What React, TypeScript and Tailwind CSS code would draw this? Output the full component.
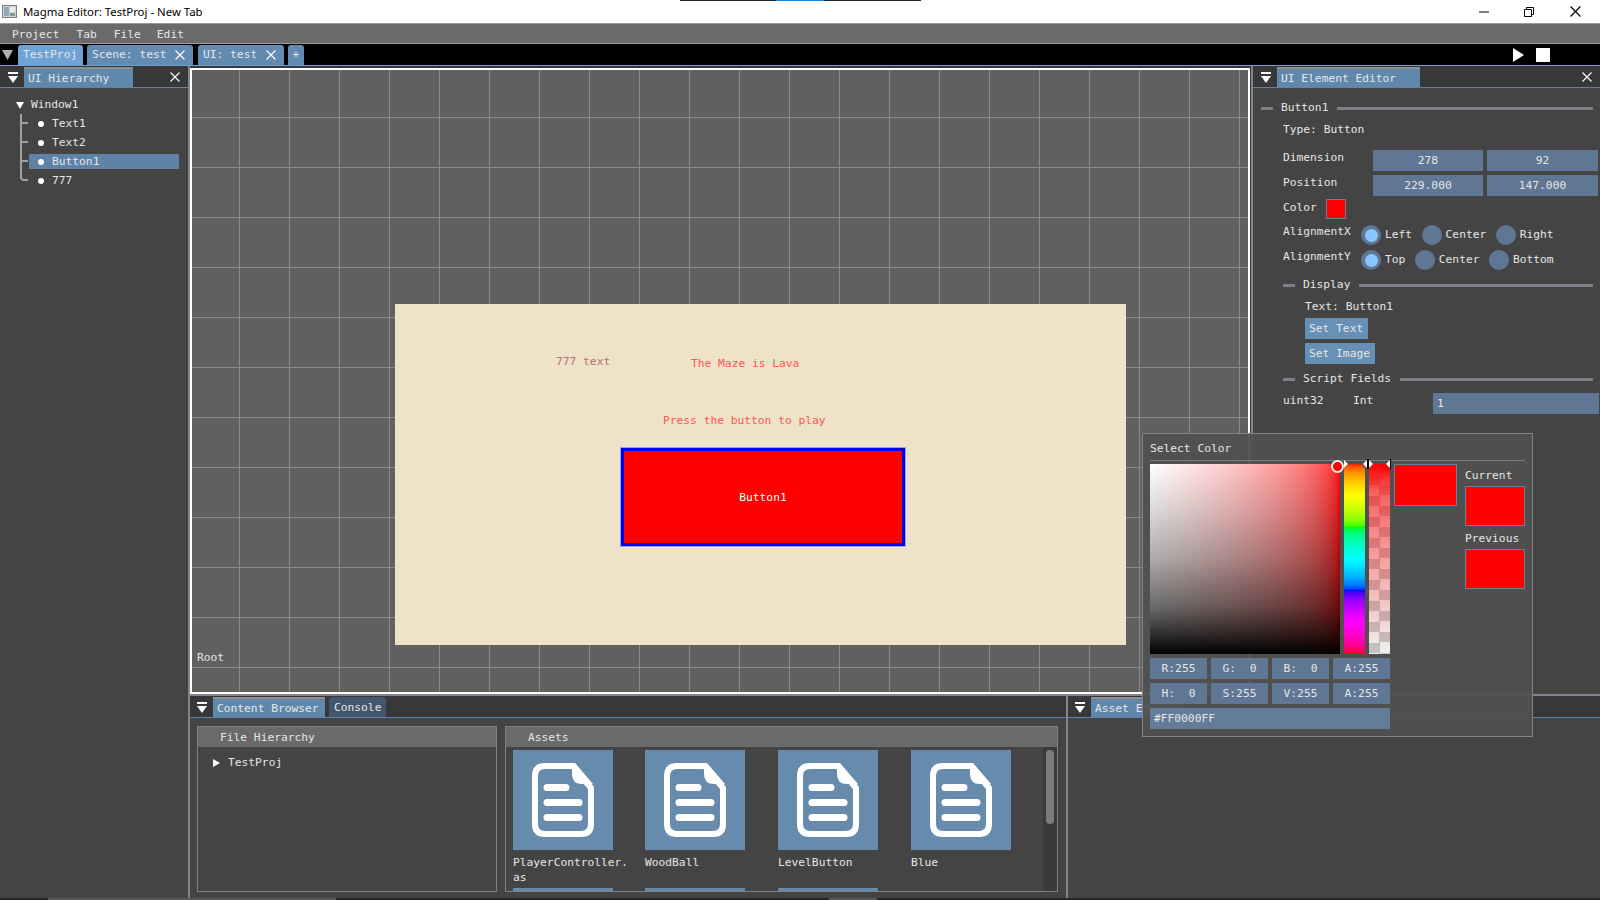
import React from "react";

const TEXT = "text-[#e6e6e6]";

function PanelIcon() {
  return (
    <svg width="10" height="12" viewBox="0 0 10 12" className="shrink-0">
      <rect x="0" y="0" width="10" height="2" fill="#fff" />
      <path d="M0 4 H10 L5 11 Z" fill="#fff" />
    </svg>
  );
}

function CloseX({ size = 10, color = "#fff" }: { size?: number; color?: string }) {
  return (
    <svg width={size} height={size} viewBox="0 0 10 10" className="shrink-0">
      <path d="M0.5 0.5 L9.5 9.5 M9.5 0.5 L0.5 9.5" stroke={color} strokeWidth="1.1" fill="none" />
    </svg>
  );
}

function TopTab({ label, active, width, close }: { label: string; active?: boolean; width: string; close?: boolean }) {
  return (
    <div
      className={`${width} h-[20px] flex items-center pl-[5px] pr-[5px] justify-between rounded-t-[3px] ${
        active ? "bg-[#6fa3d6]" : "bg-[#628bb2]"
      } ${TEXT}`}
    >
      <span>{label}</span>
      {close && (
        <span className="mr-[3px]">
          <CloseX />
        </span>
      )}
    </div>
  );
}

function HierarchyRow({ label, selected }: { label: string; selected?: boolean }) {
  return (
    <div className="h-[19px] flex items-center">
      <div className={`w-[150px] h-[15px] flex items-center pl-[9px] ${selected ? "bg-[#5f83a6]" : ""}`}>
        <span className="w-[6px] h-[6px] rounded-full bg-white mr-[8px]" />
        <span>{label}</span>
      </div>
    </div>
  );
}

function Section({ label, indent }: { label: string; indent: string }) {
  return (
    <div className={`h-[16px] flex items-center ${indent} pr-[7px]`}>
      <div className="w-[12px] h-[3px] bg-[#7e7e88]" />
      <span className="ml-[8px] mr-[9px]">{label}</span>
      <div className="flex-1 h-[3px] bg-[#7e7e88]" />
    </div>
  );
}

function NumBox({ value, width }: { value: string; width: string }) {
  return <div className={`${width} h-[21px] bg-[#5f7795] flex items-center justify-center`}>{value}</div>;
}

function Radio({ on }: { on?: boolean }) {
  return (
    <div className="w-[20px] h-[20px] rounded-full bg-[#5f7795] flex items-center justify-center shrink-0">
      {on && <div className="w-[13px] h-[13px] rounded-full bg-[#8ac6ff]" />}
    </div>
  );
}

function RadioRow({ label, options }: { label: string; options: string[] }) {
  return (
    <div className="h-[20px] flex items-center pl-[30px]">
      <span className="w-[78px] mb-[6px]">{label}</span>
      {options.map((o, i) => (
        <div key={o} className="flex items-center mr-[9.5px]">
          <Radio on={i === 0} />
          <span className="ml-[4px]">{o}</span>
        </div>
      ))}
    </div>
  );
}

function DocTile({ label, second }: { label?: string; second?: string }) {
  return (
    <div>
      <div className="w-[100px] h-[100px] bg-[#668bad]">
        <svg width="100" height="100" viewBox="0 0 100 100">
          <path
            d="M32 16 H60 L78 38 V74 Q78 84 68 84 H32 Q22 84 22 74 V26 Q22 16 32 16 Z"
            fill="none"
            stroke="#fff"
            strokeWidth="6"
            strokeLinejoin="round"
          />
          <path d="M59 14 V24 Q59 34 69 34 H80 L62 13 Z" fill="#fff" />
          <path d="M34 37.5 H53 M34 52.5 H66 M34 67.5 H66" stroke="#fff" strokeWidth="7" strokeLinecap="round" />
        </svg>
      </div>
      {label && (
        <div className="mt-[5px] leading-[15px] h-[33px]">
          <div>{label}</div>
          {second && <div>{second}</div>}
        </div>
      )}
    </div>
  );
}

function ColorBox({ value }: { value: string }) {
  return <div className="w-[57px] h-[21px] pt-px bg-[#5f7795] flex items-center justify-center whitespace-pre">{value}</div>;
}

function ColorPopup() {
  return (
    <div className={`absolute left-[1142px] top-[433px] w-[391px] h-[304px] border border-[#84848e] bg-[#505050]/95 ${TEXT}`}>
      <div className="h-[27px] mx-[7px] border-b border-[#7c7c7c] flex items-center pt-[4px]">Select Color</div>
      <div className="flex px-[7px] pt-[3px]">
        <div className="w-[240px] shrink-0">
          <div className="flex gap-[4px] relative">
            <div className="w-[190px] h-[190px] bg-[linear-gradient(to_bottom,#0000_0%,#00000026_25%,#00000054_50%,#00000094_75%,#000000d1_90%,#000_100%),linear-gradient(to_right_in_srgb-linear,#fff,#f00)]" />
            <div className="w-[21px] h-[190px] rounded-t-[6px] bg-[linear-gradient(to_bottom_in_srgb-linear,#f00,#ff0,#0f0,#0ff,#00f,#f0f,#f00)]" />
            <div className="w-[21px] h-[190px] rounded-t-[6px] bg-[linear-gradient(to_bottom,#f00,#ff000099_15%,#ff000066_40%,#ff000033_70%,#ff000000),repeating-conic-gradient(#c4c4c4_0_25%,#f0f0f0_0_50%)] bg-size-[100%_100%,21px_21px]" />
            <div className="absolute left-[181px] top-[-4px] w-[13px] h-[13px] rounded-full bg-[#f00] border-2 border-[#eee]" />
            <svg width="52" height="10" viewBox="0 0 52 10" className="absolute left-[194px] top-[-5px]">
              <path d="M0 1 L4 5 L0 9 Z" fill="#fff" />
              <path d="M23 1 L19 5 L23 9 Z" fill="#fff" />
              <rect x="23" y="0" width="2" height="10" fill="#000" />
              <path d="M25 1 L29 5 L25 9 Z" fill="#fff" />
              <path d="M46 1 L42 5 L46 9 Z" fill="#fff" />
              <rect x="46" y="0" width="1" height="10" fill="#000" />
            </svg>
          </div>
          <div className="flex gap-[4px] mt-[4px]">
            <ColorBox value="R:255" />
            <ColorBox value="G:  0" />
            <ColorBox value="B:  0" />
            <ColorBox value="A:255" />
          </div>
          <div className="flex gap-[4px] mt-[4px]">
            <ColorBox value="H:  0" />
            <ColorBox value="S:255" />
            <ColorBox value="V:255" />
            <ColorBox value="A:255" />
          </div>
          <div className="h-[21px] mt-[4px] pt-px bg-[#637c99] flex items-center pl-[4px]">#FF0000FF</div>
        </div>
        <div className="w-[63px] h-[42px] ml-[4px] bg-[#f00] border border-[#6a7ea0] shrink-0" />
        <div className="ml-[8px] w-[60px]">
          <div className="h-[22px] flex items-center pt-[2px]">Current</div>
          <div className="h-[40px] bg-[#f00] border border-[#6a7ea0]" />
          <div className="h-[23px] flex items-center pt-[2px]">Previous</div>
          <div className="h-[40px] bg-[#f00] border border-[#6a7ea0]" />
        </div>
      </div>
    </div>
  );
}

function UiHierarchy() {
  return (
    <div className="w-[188px] flex flex-col bg-[#444444] shrink-0">
      <div className="h-[22px] flex items-end bg-[#383838] border-b border-[#5f83a6] pl-[8px] pr-[8px]">
        <div className="h-[19px] flex items-center mr-[6px]">
          <PanelIcon />
        </div>
        <div className="w-[109px] h-[20px] bg-[#6088ad] border-t-2 border-[#8f8f8f] flex items-center pl-[4px] pt-px">UI Hierarchy</div>
        <div className="flex-1 h-[20px] flex items-center justify-end">
          <CloseX />
        </div>
      </div>
      <div className="pt-[8px] pl-[16px]">
        <div className="h-[18px] flex items-center">
          <svg width="8" height="7" viewBox="0 0 8 7">
            <path d="M0 0 H8 L4 7 Z" fill="#fff" />
          </svg>
          <span className="ml-[7px]">Window1</span>
        </div>
        <div className="flex">
          <svg width="13" height="71" viewBox="0 0 13 71" className="shrink-0">
            <path
              d="M5 0 V63 Q5 66 8 66 H12 M5 9 H12 M5 28 H12 M5 47 H12"
              stroke="#a0a0a0"
              strokeWidth="2"
              fill="none"
            />
          </svg>
          <div>
            <HierarchyRow label="Text1" />
            <HierarchyRow label="Text2" />
            <HierarchyRow label="Button1" selected />
            <HierarchyRow label="777" />
          </div>
        </div>
      </div>
    </div>
  );
}

function Viewport() {
  return (
    <div className="relative w-[1060px] h-[626px] mt-[2px] border-2 border-white bg-[#606060] bg-[linear-gradient(to_right,#8a8a8a_1px,transparent_1px),linear-gradient(to_bottom,#8a8a8a_1px,transparent_1px)] bg-size-[50px_50px] bg-position-[47px_47px] overflow-hidden">
      <div className="absolute left-[203px] top-[234px] w-[731px] h-[341px] bg-[#eee2c8]">
        <span className="absolute left-[161px] top-[52px] text-[#b87070]">777 text</span>
        <span className="absolute left-[296px] top-[54px] text-[#ff5555]">The Maze is Lava</span>
        <span className="absolute left-[268px] top-[111px] text-[#ff5555]">Press the button to play</span>
        <div className="absolute left-[226px] top-[144px] w-[284px] h-[98px] pt-[2px] bg-[#f00] border-[3px] border-[#0000f0] outline outline-1 outline-[#a0a0e0] flex items-center justify-center text-white">
          Button1
        </div>
      </div>
      <span className="absolute left-[5px] top-[582px]">Root</span>
    </div>
  );
}

function ElementEditor() {
  return (
    <div className="flex-1 flex flex-col bg-[#444444] min-w-0">
      <div className="h-[22px] flex items-end bg-[#383838] border-b border-[#5f83a6] pl-[8px] pr-[8px]">
        <div className="h-[19px] flex items-center mr-[6px]">
          <PanelIcon />
        </div>
        <div className="w-[143px] h-[20px] bg-[#6088ad] border-t-2 border-[#8f8f8f] flex items-center pl-[4px] pt-px">UI Element Editor</div>
        <div className="flex-1 h-[20px] flex items-center justify-end">
          <CloseX />
        </div>
      </div>
      <div className="pt-[12px]">
        <Section label="Button1" indent="pl-[8px]" />
        <div className="h-[16px] mt-[6px] pl-[30px] flex items-center">Type: Button</div>
        <div className="h-[21px] mt-[12px] pl-[30px] flex items-center">
          <span className="w-[90px] mb-[5px]">Dimension</span>
          <NumBox value="278" width="w-[110px]" />
          <div className="w-[4px]" />
          <NumBox value="92" width="w-[111px]" />
        </div>
        <div className="h-[21px] mt-[4px] pl-[30px] flex items-center">
          <span className="w-[90px] mb-[5px]">Position</span>
          <NumBox value="229.000" width="w-[110px]" />
          <div className="w-[4px]" />
          <NumBox value="147.000" width="w-[111px]" />
        </div>
        <div className="h-[20px] mt-[3px] pl-[30px] flex items-center">
          <span className="w-[43px] mb-[2px]">Color</span>
          <div className="w-[20px] h-[20px] bg-[#f00] border border-[#6a7ea0]" />
        </div>
        <div className="mt-[6px]">
          <RadioRow label="AlignmentX" options={["Left", "Center", "Right"]} />
        </div>
        <div className="mt-[5px]">
          <RadioRow label="AlignmentY" options={["Top", "Center", "Bottom"]} />
        </div>
        <div className="mt-[7px]">
          <Section label="Display" indent="pl-[30px]" />
        </div>
        <div className="h-[16px] mt-[6px] pl-[52px] flex items-center">Text: Button1</div>
        <div className="mt-[3px] ml-[52px] w-[63px] h-[21px] bg-[#6690b5] flex items-center pl-[4px]">Set Text</div>
        <div className="mt-[4px] ml-[52px] w-[70px] h-[21px] bg-[#6690b5] flex items-center pl-[4px]">Set Image</div>
        <div className="mt-[7px]">
          <Section label="Script Fields" indent="pl-[30px]" />
        </div>
        <div className="h-[21px] mt-[6px] pl-[30px] flex items-center">
          <span className="w-[70px] mb-[6px]">uint32</span>
          <span className="w-[80px] mb-[6px]">Int</span>
          <div className="w-[166px] h-[21px] bg-[#5f7795] flex items-center pl-[4px]">1</div>
        </div>
      </div>
    </div>
  );
}

function ContentBrowser() {
  return (
    <div className="w-[876px] flex flex-col bg-[#444444] shrink-0">
      <div className="h-[22px] flex items-end bg-[#383838] border-b border-[#5f83a6] pl-[7px]">
        <div className="h-[19px] flex items-center mr-[6px]">
          <PanelIcon />
        </div>
        <div className="w-[112px] h-[20px] bg-[#6088ad] border-t-2 border-[#8f8f8f] flex items-center pl-[4px] pt-[2px]">Content Browser</div>
        <div className="ml-[4px] w-[57px] h-[20px] bg-[#43566d] rounded-t-[4px] flex items-center pl-[5px] pt-[2px]">Console</div>
      </div>
      <div className="flex-1 flex pt-[8px] pl-[7px] gap-[8px]">
        <div className="w-[300px] h-[166px] border border-[#808080] shrink-0">
          <div className="h-[20px] bg-[#6a6a6a] flex items-center pl-[22px] pt-[2px]">File Hierarchy</div>
          <div className="pt-[10px] pl-[15px] flex items-center">
            <svg width="7" height="8" viewBox="0 0 7 8">
              <path d="M0 0 L7 4 L0 8 Z" fill="#fff" />
            </svg>
            <span className="ml-[8px]">TestProj</span>
          </div>
        </div>
        <div className="w-[553px] h-[166px] border border-[#808080] shrink-0 flex flex-col">
          <div className="h-[20px] bg-[#6a6a6a] flex items-center pl-[22px] pt-[2px] shrink-0">Assets</div>
          <div className="flex-1 flex overflow-hidden">
            <div className="flex-1 pt-[3px] pl-[7px] grid grid-cols-[132px_133px_133px_132px] auto-rows-[138px]">
              <DocTile label="PlayerController." second="as" />
              <DocTile label="WoodBall" />
              <DocTile label="LevelButton" />
              <DocTile label="Blue" />
              <DocTile />
              <DocTile />
              <DocTile />
            </div>
            <div className="w-[14px] bg-[#3a3a3a] pt-[3px] flex justify-center">
              <div className="w-[8px] h-[74px] rounded-[4px] bg-[#7c7c7c]" />
            </div>
          </div>
        </div>
      </div>
    </div>
  );
}

function AssetEditor() {
  return (
    <div className="flex-1 flex flex-col bg-[#444444]">
      <div className="h-[22px] flex items-end bg-[#383838] border-b border-[#5f83a6] pl-[7px]">
        <div className="h-[19px] flex items-center mr-[6px]">
          <PanelIcon />
        </div>
        <div className="w-[91px] h-[20px] bg-[#6088ad] border-t-2 border-[#8f8f8f] flex items-center pl-[4px] pt-[2px]">Asset Editor</div>
      </div>
    </div>
  );
}

export default function App() {
  return (
    <div className={`relative w-[1600px] h-[900px] overflow-hidden bg-[#444444] flex flex-col font-['DejaVu_Sans_Mono',monospace] text-[11.25px] leading-none ${TEXT}`}>
      {/* window title */}
      <div className="h-[23px] bg-white flex items-center pl-[2px] text-black font-['Noto_Sans',sans-serif] text-[11.4px] shrink-0">
        <svg width="15" height="13" viewBox="0 0 15 13" className="mr-[6px]">
          <rect x="0.5" y="0.5" width="14" height="12" fill="#cfd6da" stroke="#7a7a7a" />
          <rect x="2" y="2" width="5" height="9" fill="#8fa8b8" />
          <rect x="8" y="2" width="5" height="5" fill="#e8ecee" />
          <rect x="8" y="8" width="5" height="3" fill="#7aa088" />
        </svg>
        <span>Magma Editor: TestProj - New Tab</span>
        <div className="absolute left-[680px] top-0 w-[241px] h-px flex bg-[#222222]">
          <div className="w-[96px]" />
          <div className="w-[48px] bg-[#0a84e0]" />
        </div>
        <div className="ml-auto flex items-center">
          <svg width="10" height="10" viewBox="0 0 10 10" className="mr-[35px]">
            <path d="M0 5 H10" stroke="#000" strokeWidth="1" />
          </svg>
          <svg width="10" height="10" viewBox="0 0 10 10" className="mr-[36px]">
            <path d="M0.5 2.5 H7.5 V9.5 H0.5 Z M2.5 2.5 V0.5 H9.5 V7.5 H7.5" stroke="#000" strokeWidth="1" fill="none" />
          </svg>
          <span className="mr-[19px]">
            <CloseX size={11} color="#000" />
          </span>
        </div>
      </div>

      {/* menu */}
      <div className="h-[21px] bg-[#6a6a6a] border-y border-[#9a9a9a] flex items-center shrink-0 pl-[12px] pt-[2px]">
        <span className="mr-[17px]">Project</span>
        <span className="mr-[17px]">Tab</span>
        <span className="mr-[16px]">File</span>
        <span>Edit</span>
      </div>

      {/* project tabs */}
      <div className="h-[21px] bg-black border-b border-[#6f9fd0] flex items-end shrink-0 pl-[2px] box-content">
        <svg width="11" height="10" viewBox="0 0 11 10" className="mb-[5px] mr-[5px]">
          <path d="M0 0 H11 L5.5 10 Z" fill="#b0b0b0" />
        </svg>
        <TopTab label="TestProj" active width="w-[65px]" />
        <div className="w-[4px]" />
        <TopTab label="Scene: test" width="w-[106px]" close />
        <div className="w-[5px]" />
        <TopTab label="UI: test" width="w-[86px]" close />
        <div className="w-[4px]" />
        <div className="w-[16px] h-[20px] bg-[#628bb2] rounded-t-[3px] flex items-center justify-center">+</div>
        <svg width="11" height="14" viewBox="0 0 11 14" className="ml-auto mb-[3px] mr-[12px]">
          <path d="M0 0 L11 7 L0 14 Z" fill="#fff" />
        </svg>
        <div className="w-[14px] h-[14px] bg-white mb-[3px] mr-[50px]" />
      </div>

      {/* dock area */}
      <div className="flex-1 flex min-h-0">
        <UiHierarchy />
        <div className="w-[2px] bg-[#84848e] shrink-0" />
        <div className="flex-1 flex flex-col min-w-0">
          <div className="h-[628px] flex shrink-0 bg-[#383838]">
            <Viewport />
            <div className="w-px" />
            <div className="w-[2px] bg-[#84848e] shrink-0" />
            <ElementEditor />
          </div>
          <div className="h-[2px] bg-[#84848e] shrink-0" />
          <div className="flex-1 flex min-h-0">
            <ContentBrowser />
            <div className="w-[2px] bg-[#84848e] shrink-0" />
            <AssetEditor />
          </div>
        </div>
      </div>

      {/* bottom strip */}
      <div className="h-[2px] bg-[#262626] flex shrink-0">
        <div className="w-[48px]" />
        <div className="w-[288px] bg-[#5a5a5a]" />
        <div className="w-[493px]" />
        <div className="w-[48px] bg-[#5a5a5a]" />
      </div>

      <ColorPopup />
    </div>
  );
}
